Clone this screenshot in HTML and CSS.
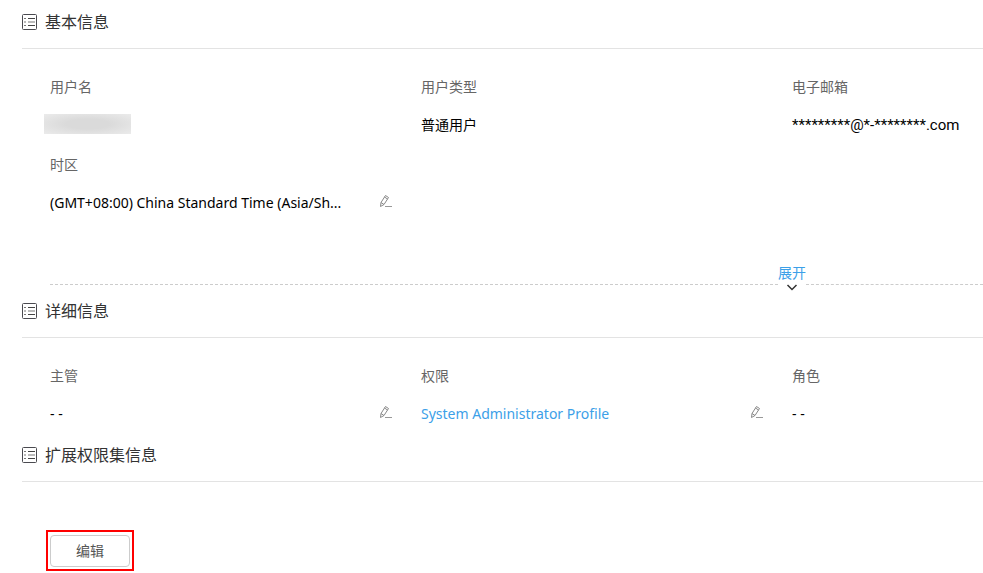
FILE: index.html
```html
<!DOCTYPE html>
<html lang="zh-CN">
<head>
  <meta charset="UTF-8">
  <meta name="viewport" content="width=device-width, initial-scale=1.0">
  <title>基本信息</title>
  <link rel="stylesheet" href="styles.css">
</head>
<body>

  <svg width="0" height="0" class="icon-defs" aria-hidden="true">
    <symbol id="icon-list" viewBox="0 0 16 16">
      <rect x="0.5" y="0.5" width="14" height="15" rx="1" fill="none" stroke="#4a4a50"/>
      <path d="M2 4.5h2M2 11.5h2" stroke="#777"/>
      <path d="M6 4.5h7M6 11.5h7" stroke="#444"/>
      <path d="M2 8h2M6 8h7" stroke="#bbb" stroke-width="2"/>
    </symbol>
    <symbol id="icon-pen" viewBox="0 0 14 14">
      <path d="M1.5 12.5l0.5-4L6.5 1.5l3 2L5 10.500z M2 8.500l3 2 M5.500 3l3 2" fill="none" stroke="#888" stroke-linejoin="round"/>
      <path d="M6 12.500h7" stroke="#999"/>
    </symbol>
  </svg>

  <section>
    <h2 class="section-title"><svg class="list-icon"><use href="#icon-list"/></svg>基本信息</h2>
    <dl class="fields">
      <div class="field">
        <dt>用户名</dt>
        <dd><span class="masked"></span></dd>
      </div>
      <div class="field">
        <dt>用户类型</dt>
        <dd>普通用户</dd>
      </div>
      <div class="field">
        <dt>电子邮箱</dt>
        <dd class="email">*********@*-********.com</dd>
      </div>
      <div class="field">
        <dt>时区</dt>
        <dd>
          <span class="value">(GMT+08:00) China Standard Time (Asia/Sh...</span>
          <button type="button" class="edit-icon" aria-label="编辑"><svg><use href="#icon-pen"/></svg></button>
        </dd>
      </div>
    </dl>
    <div class="expand">
      <button type="button" class="expand-btn">展开
        <svg class="chevron" viewBox="0 0 12 7"><path d="M1.500 1L6 5.500L10.500 1" fill="none" stroke="#333" stroke-width="1.500"/></svg>
      </button>
    </div>
  </section>

  <section>
    <h2 class="section-title"><svg class="list-icon"><use href="#icon-list"/></svg>详细信息</h2>
    <dl class="fields">
      <div class="field">
        <dt>主管</dt>
        <dd>
          <span class="value">- -</span>
          <button type="button" class="edit-icon" aria-label="编辑"><svg><use href="#icon-pen"/></svg></button>
        </dd>
      </div>
      <div class="field">
        <dt>权限</dt>
        <dd>
          <a href="#" class="value">System Administrator Profile</a>
          <button type="button" class="edit-icon" aria-label="编辑"><svg><use href="#icon-pen"/></svg></button>
        </dd>
      </div>
      <div class="field">
        <dt>角色</dt>
        <dd>- -</dd>
      </div>
    </dl>
  </section>

  <section>
    <h2 class="section-title"><svg class="list-icon"><use href="#icon-list"/></svg>扩展权限集信息</h2>
    <div class="actions">
      <div class="highlight">
        <button type="button" class="btn">编辑</button>
      </div>
    </div>
  </section>

</body>
</html>
```
FILE: styles.css
```css
* {
  box-sizing: border-box;
}

body {
  margin: 0;
  padding: 10px 0 0 22px;
  background-color: #fff;
  font-family: "Noto Sans", "Noto Sans CJK SC", sans-serif;
  font-size: 14px;
  line-height: 20px;
  color: #000;
}

button {
  padding: 0;
  border: none;
  background: none;
  font: inherit;
  cursor: pointer;
}

a {
  color: #3ca0e8;
  text-decoration: none;
}

.icon-defs {
  display: none;
}

.section-title {
  display: flex;
  align-items: center;
  gap: 7px;
  margin: 0;
  padding-bottom: 14px;
  border-bottom: 1px solid #e3e3e3;
  font-size: 16px;
  font-weight: normal;
  line-height: 24px;
  color: #333;
}

.list-icon {
  width: 16px;
  height: 16px;
}

.fields {
  display: grid;
  grid-template-columns: 1fr 1fr 191px;
  row-gap: 20px;
  margin: 0;
  padding: 28px 0 19px 28px;
}

.field {
  display: flex;
  flex-direction: column;
  gap: 18px;
  min-width: 0;
}

.field dt {
  color: #666;
}

.field dd {
  display: flex;
  align-items: center;
  height: 20px;
  margin: 0;
  white-space: nowrap;
}

.field .email {
  font-family: Roboto, sans-serif;
  font-size: 15px;
}

.value {
  flex: 1;
}

.masked {
  width: 87px;
  height: 20px;
  margin: -2px 0 0 -6px;
  background: radial-gradient(ellipse at center, #dadada 35%, #ebebeb 100%);
}

.edit-icon {
  flex: none;
  width: 14px;
  height: 14px;
  margin: 0 28px 4px 20px;
}

.edit-icon svg {
  display: block;
  width: 14px;
  height: 14px;
}

.expand {
  display: flex;
  align-items: flex-start;
  margin: 31px 0 8px 28px;
}

/* dashed line on both sides of the toggle */
.expand::before,
.expand::after {
  content: "";
  height: 21px;
  border-bottom: 1px dashed #ccc;
}

.expand::before {
  flex: 1;
}

.expand::after {
  width: 177px;
}

.expand-btn {
  width: 28px;
  color: #3ca0e8;
}

.chevron {
  display: block;
  width: 12px;
  height: 7px;
  margin: 1px auto 0;
}

.actions {
  padding: 48px 0 2px 24px;
}

.highlight {
  display: inline-block;
  padding: 3px 2px 2px;
  border: 2px solid #f00;
  vertical-align: top;
}

.btn {
  display: block;
  width: 80px;
  height: 32px;
  border: 1px solid #ccc;
  border-radius: 4px;
  background-color: #fff;
  color: #555;
}
```
